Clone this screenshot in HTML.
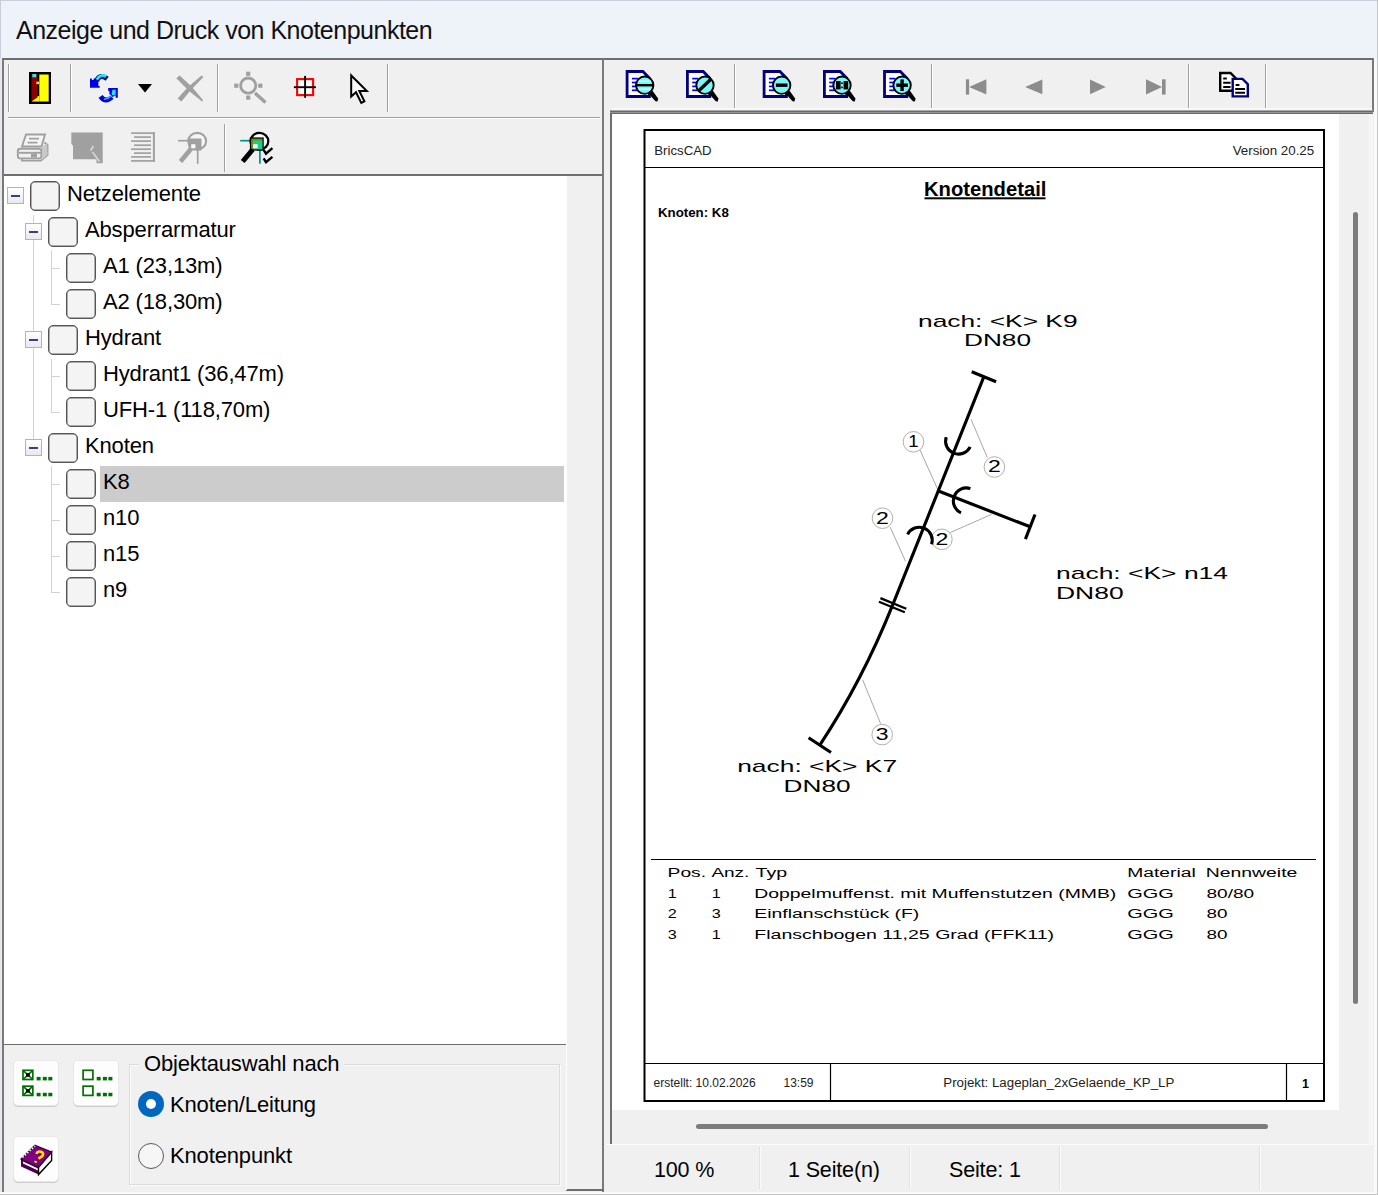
<!DOCTYPE html>
<html>
<head>
<meta charset="utf-8">
<style>
html,body{margin:0;padding:0;}
body{width:1378px;height:1195px;position:relative;overflow:hidden;background:#eef2f9;font-family:"Liberation Sans",sans-serif;color:#000;}
.abs{position:absolute;}
.ui{font-size:22px;letter-spacing:-0.15px;white-space:pre;line-height:24px;}
#title{left:16px;top:16px;font-size:25px;letter-spacing:-0.5px;line-height:28px;white-space:pre;color:#111;}
/* panels */
#lp{left:2px;top:58px;width:602px;height:1134px;background:#f0f0f0;box-sizing:border-box;border:2px solid #7a7a7a;border-top-color:#6e6e6e;border-bottom:none;}
#rp-tb{left:604px;top:58px;width:770px;height:54px;background:#f0f0f0;box-sizing:border-box;border-top:2px solid #6e6e6e;border-right:2px solid #7a7a7a;}
#rp-body{left:604px;top:112px;width:770px;height:1080px;background:#f0f0f0;}
.vsep{width:1px;background:#a0a0a0;box-shadow:1px 0 0 #fff;}
.hsep{height:1px;background:#a0a0a0;box-shadow:0 1px 0 #fff;}
/* tree */
#tree{left:4px;top:174px;width:562px;height:871px;background:#fff;border-top:2px solid #6e6e6e;border-bottom:1px solid #6e6e6e;box-sizing:border-box;}
.cb{width:28px;height:28px;border:1px solid #555;box-shadow:inset 0 0 0 0.5px #666;border-radius:5px;background:#f4f4f4;box-sizing:content-box;}
.ex{width:15px;height:15px;border:1px solid #b4b4b4;background:linear-gradient(#fff,#e8e8ee);}
.ex:after{content:"";position:absolute;left:3px;top:7px;width:9px;height:2px;background:#3c4078;}
.btn{width:44px;height:44px;background:#fdfdfd;border-radius:4px;box-shadow:0 0 0 1px #e8e8e8, 0 1px 0 1px #cdcdcd;}
</style>
</head>
<body>
<div class="abs" style="left:0;top:0;width:1378px;height:1px;background:#c9ced8"></div>
<div class="abs" style="left:0;top:0;width:1px;height:1195px;background:#c9ced8"></div>
<div class="abs" id="title">Anzeige und Druck von Knotenpunkten</div>

<!-- LEFT PANEL -->
<div class="abs" id="lp"></div>
<!-- RIGHT PANEL -->
<div class="abs" id="rp-tb"></div>
<div class="abs" id="rp-body"></div>

<div class="abs" style="left:1374px;top:58px;width:3px;height:1137px;background:#fafafa"></div>
<div class="abs" style="left:0;top:1192px;width:1378px;height:2px;background:#fafafa"></div>
<div class="abs" style="left:1377px;top:0;width:1px;height:1195px;background:#c6c6c6"></div>
<div class="abs" style="left:0;top:1194px;width:1378px;height:1px;background:#c6c6c6"></div>
<div class="abs" style="left:0;top:58px;width:2px;height:1134px;background:#e6e8ec"></div>
<div class="abs" style="left:566px;top:1189px;width:38px;height:2px;background:#6e6e6e"></div>
<!--LEFT-CONTENT-->
<div class="abs vsep" style="left:8px;top:64px;height:48px"></div>
<div class="abs vsep" style="left:70px;top:64px;height:48px"></div>
<div class="abs vsep" style="left:217px;top:64px;height:48px"></div>
<div class="abs vsep" style="left:387px;top:64px;height:48px"></div>
<div class="abs hsep" style="left:8px;top:117px;width:592px"></div>
<div class="abs vsep" style="left:224px;top:124px;height:48px"></div>
<div class="abs" id="tree"></div>
<div class="abs" style="left:4px;top:174px;width:598px;height:2px;background:#6e6e6e"></div>
<div class="abs" style="left:566px;top:176px;width:1px;height:1014px;background:#fff"></div>
<div class="abs" style="left:33px;top:215px;width:1px;height:225px;background:#d2d2d2"></div>
<div class="abs" style="left:51px;top:251px;width:1px;height:54px;background:#d2d2d2"></div>
<div class="abs" style="left:51px;top:268px;width:9px;height:1px;background:#d2d2d2"></div>
<div class="abs" style="left:51px;top:304px;width:9px;height:1px;background:#d2d2d2"></div>
<div class="abs" style="left:51px;top:359px;width:1px;height:54px;background:#d2d2d2"></div>
<div class="abs" style="left:51px;top:376px;width:9px;height:1px;background:#d2d2d2"></div>
<div class="abs" style="left:51px;top:412px;width:9px;height:1px;background:#d2d2d2"></div>
<div class="abs" style="left:51px;top:467px;width:1px;height:126px;background:#d2d2d2"></div>
<div class="abs" style="left:51px;top:484px;width:9px;height:1px;background:#d2d2d2"></div>
<div class="abs" style="left:51px;top:520px;width:9px;height:1px;background:#d2d2d2"></div>
<div class="abs" style="left:51px;top:556px;width:9px;height:1px;background:#d2d2d2"></div>
<div class="abs" style="left:51px;top:592px;width:9px;height:1px;background:#d2d2d2"></div>
<div class="abs ex" style="left:7px;top:187px"></div>
<div class="abs cb" style="left:30px;top:181px"></div>
<div class="abs ui" style="left:67px;top:182px">Netzelemente</div>
<div class="abs ex" style="left:25px;top:223px"></div>
<div class="abs cb" style="left:48px;top:217px"></div>
<div class="abs ui" style="left:85px;top:218px">Absperrarmatur</div>
<div class="abs cb" style="left:66px;top:253px"></div>
<div class="abs ui" style="left:103px;top:254px">A1 (23,13m)</div>
<div class="abs cb" style="left:66px;top:289px"></div>
<div class="abs ui" style="left:103px;top:290px">A2 (18,30m)</div>
<div class="abs ex" style="left:25px;top:331px"></div>
<div class="abs cb" style="left:48px;top:325px"></div>
<div class="abs ui" style="left:85px;top:326px">Hydrant</div>
<div class="abs cb" style="left:66px;top:361px"></div>
<div class="abs ui" style="left:103px;top:362px">Hydrant1 (36,47m)</div>
<div class="abs cb" style="left:66px;top:397px"></div>
<div class="abs ui" style="left:103px;top:398px">UFH-1 (118,70m)</div>
<div class="abs ex" style="left:25px;top:439px"></div>
<div class="abs cb" style="left:48px;top:433px"></div>
<div class="abs ui" style="left:85px;top:434px">Knoten</div>
<div class="abs" style="left:100px;top:466px;width:464px;height:36px;background:#cccccc"></div>
<div class="abs cb" style="left:66px;top:469px"></div>
<div class="abs ui" style="left:103px;top:470px">K8</div>
<div class="abs cb" style="left:66px;top:505px"></div>
<div class="abs ui" style="left:103px;top:506px">n10</div>
<div class="abs cb" style="left:66px;top:541px"></div>
<div class="abs ui" style="left:103px;top:542px">n15</div>
<div class="abs cb" style="left:66px;top:577px"></div>
<div class="abs ui" style="left:103px;top:578px">n9</div>
<div class="abs btn" style="left:14px;top:1061px"></div>
<div class="abs btn" style="left:74px;top:1061px"></div>
<div class="abs btn" style="left:14px;top:1137px"></div>
<div class="abs" style="left:129px;top:1064px;width:431px;height:121px;box-sizing:border-box;border:1px solid #dcdcdc;box-shadow:inset 1px 1px 0 #fafafa, 1px 1px 0 #fafafa"></div>
<div class="abs ui" style="left:139px;top:1052px;padding:0 5px;background:#f0f0f0">Objektauswahl nach</div>
<div class="abs" style="left:138px;top:1091px;width:26px;height:26px;border-radius:50%;background:#0067c0;"></div>
<div class="abs" style="left:146px;top:1099px;width:10px;height:10px;border-radius:50%;background:#fff;"></div>
<div class="abs" style="left:138px;top:1143px;width:24px;height:24px;border-radius:50%;background:#f6f6f6;border:1px solid #5a5a5a"></div>
<div class="abs ui" style="left:170px;top:1093px">Knoten/Leitung</div>
<div class="abs ui" style="left:170px;top:1144px">Knotenpunkt</div>
<svg class="abs" style="left:0;top:0" width="1378" height="1195" viewBox="0 0 1378 1195">
<rect x="29" y="72" width="22" height="32" fill="#000"/>
<rect x="31.5" y="74.5" width="6" height="27" fill="#8b0000"/>
<rect x="39.3" y="74.5" width="9.4" height="27" fill="#ffff00"/>
<polygon points="31.5,101.5 37.6,97.2 37.6,96 39.3,96 39.3,101.5" fill="#ffff00"/>
<rect x="32.3" y="74" width="4" height="3.3" fill="#40e0e0"/>
<rect x="36.4" y="81.6" width="2.6" height="2.6" fill="#ffe040"/>
<path d="M96.5 81 Q100 73.2 107.2 78.8" fill="none" stroke="#0a1a70" stroke-width="5"/>
<path d="M96.8 79.6 Q100.4 73.2 106 76.6" fill="none" stroke="#20e8ff" stroke-width="2.6"/>
<path d="M90 78.6 L91.8 78.6 L91.8 80 L93.6 80 L93.6 78.6 L95.6 78.6 L95.6 80 L97.6 80 L98.4 82.6 L98.4 86 L99.7 86 L99.7 87.7 L90 87.7 Z" fill="#0000e6"/>
<path d="M100.6 96.4 Q105 103.2 112 97.2" fill="none" stroke="#0000dc" stroke-width="4.8"/>
<path d="M108.2 88.1 L117.8 88.1 L117.8 97.8 L115.6 97.8 L115.6 95.2 L112.6 97 L110.4 94.4 L109.4 94.4 L109.4 91 L108.2 91 Z" fill="#0000e6"/>
<path d="M112.4 89.8 L115.6 89.8 L115.6 94.4 L113 95.6 L111.6 94 Z" fill="#20e8ff"/>
<path d="M104 99.3 Q107 99.5 110.6 96.4" fill="none" stroke="#30b0ff" stroke-width="1.4"/>
<polygon points="138,84 152,84 145,92.4" fill="#000"/>
<path d="M176.3 78.2 L179.6 75.4 L191.5 86.5 L203.2 100.2 L202 101.6 L188.5 90.5 Z" fill="#a0a0a0"/>
<path d="M201.6 75.6 L203.4 77 L190 91 L181.5 101.6 L177.6 98.6 L187.5 87.5 Z" fill="#a0a0a0"/>
<circle cx="248.2" cy="85.6" r="7.6" fill="none" stroke="#a0a0a0" stroke-width="2.8"/>
<rect x="246.1" y="71.7" width="4.2" height="4.2" fill="#a0a0a0"/>
<rect x="246.1" y="95.5" width="4.2" height="4.2" fill="#a0a0a0"/>
<rect x="234.20000000000002" y="83.60000000000001" width="4.2" height="4.2" fill="#a0a0a0"/>
<rect x="258.2" y="83.60000000000001" width="4.2" height="4.2" fill="#a0a0a0"/>
<line x1="255" y1="93" x2="265.5" y2="102.5" stroke="#a0a0a0" stroke-width="3.4"/>
<rect x="297.1" y="79.1" width="16" height="16" fill="#fdfdfd" stroke="#ff0000" stroke-width="2.1"/>
<line x1="293.9" y1="87.2" x2="315.9" y2="87.2" stroke="#000" stroke-width="1.9"/>
<line x1="305.1" y1="75.9" x2="305.1" y2="97.8" stroke="#000" stroke-width="1.9"/>
<polygon points="351.2,75.5 351.2,96.5 356,92.2 361.3,103 364.4,101.4 359.3,91 366.8,91" fill="#fff" stroke="#000" stroke-width="2" stroke-linejoin="miter"/>
<g fill="none" stroke="#a0a0a0" stroke-width="1.9">
<path d="M26 134.5 L45 134.5 L41.5 146.5 L22 146.5 Z" fill="#f4f4f4"/>
<path d="M29 138.6 L39 138.6 M27.5 142.6 L37.5 142.6" stroke-width="1.8"/>
<rect x="17.8" y="148.8" width="23.6" height="9.6" rx="2.5" fill="#f0f0f0"/>
<path d="M19 152.8 L41 152.8" />
<path d="M22 158.6 L22 160.6 L41 160.6 L47.5 155 L47.5 145 L44.5 142.5 M41.4 150 L47 144.6"/>
</g>
<rect x="31" y="153.5" width="6" height="4" fill="#a0a0a0"/>
<path d="M42 147 L47 143.5 L47.5 155 L42 160 Z" fill="#c8c8c8"/>
<path d="M71.3 132.4 L102.7 132.4 L102.7 163.3 L96.5 163.3 L96.5 159.3 L73 159.3 L73 146 L71.3 143.5 Z" fill="#a0a0a0"/>
<path d="M93.5 146 L90.5 150.5 M92.5 152 L99.5 161.5" stroke="#d8d8d8" stroke-width="1.6" fill="none"/>
<g stroke="#a0a0a0" stroke-width="1.7" fill="none">
<line x1="131.1" y1="133.1" x2="154.9" y2="133.1"/>
<line x1="134" y1="137.1" x2="151" y2="137.1"/>
<line x1="131.1" y1="141.1" x2="151" y2="141.1"/>
<line x1="134" y1="145.2" x2="151" y2="145.2"/>
<line x1="131.1" y1="149.2" x2="151" y2="149.2"/>
<line x1="134" y1="153.1" x2="151" y2="153.1"/>
<line x1="131.1" y1="156.9" x2="151" y2="156.9"/>
<line x1="131.1" y1="160.9" x2="154.9" y2="160.9"/>
<line x1="153.9" y1="132.3" x2="153.9" y2="161.7" stroke-width="2"/>
</g>
<line x1="178" y1="140.7" x2="189.5" y2="140.7" stroke="#a0a0a0" stroke-width="1.7"/>
<line x1="197.7" y1="150" x2="197.7" y2="163.8" stroke="#a0a0a0" stroke-width="1.7"/>
<ellipse cx="197.2" cy="141.2" rx="8.9" ry="8.3" fill="#f6f6f6" stroke="#a0a0a0" stroke-width="2.1"/>
<rect x="188.5" y="138.5" width="13" height="12" fill="#a0a0a0"/>
<rect x="191.2" y="144.3" width="4.2" height="4" fill="#fff"/>
<line x1="190.5" y1="149.5" x2="180.5" y2="161.5" stroke="#a0a0a0" stroke-width="4.6"/>
<line x1="240.2" y1="140.7" x2="251.7" y2="140.7" stroke="#009090" stroke-width="1.7"/>
<line x1="259.9" y1="150" x2="259.9" y2="163.8" stroke="#009090" stroke-width="1.7"/>
<ellipse cx="259.4" cy="141.2" rx="8.9" ry="8.3" fill="#fff" stroke="#000" stroke-width="2.3"/>
<rect x="250.5" y="138" width="12.6" height="12" fill="#22cc88"/>
<path d="M250.5 138 h12.6 v2.4 h-10 v9.6 h-2.6 Z" fill="#6b8e23"/>
<rect x="250.5" y="138" width="12.6" height="12" fill="none" stroke="#000" stroke-width="1.2"/>
<rect x="253.2" y="144.2" width="4.4" height="4" fill="#fff"/>
<line x1="252.7" y1="149.5" x2="242.7" y2="161.5" stroke="#000" stroke-width="5"/>
<path d="M263.6 149.8 L266 153.6 L272.4 148.2" fill="none" stroke="#000" stroke-width="2.4"/>
<path d="M263.6 158.4 L266 162.2 L272.4 156.79999999999998" fill="none" stroke="#000" stroke-width="2.4"/>
<path d="M627.1 71.5 L642.9 71.5 L649.4 78 L649.4 96.5 L627.1 96.5 Z" fill="#fff" stroke="#000080" stroke-width="2.8"/>
<line x1="631.9" y1="78.6" x2="637.9" y2="78.6" stroke="#0000ff" stroke-width="1.7"/>
<line x1="631.9" y1="82.5" x2="637.9" y2="82.5" stroke="#0000ff" stroke-width="1.7"/>
<line x1="631.9" y1="86.4" x2="637.9" y2="86.4" stroke="#0000ff" stroke-width="1.7"/>
<line x1="631.9" y1="90.3" x2="637.9" y2="90.3" stroke="#0000ff" stroke-width="1.7"/>
<polygon points="648.4,93.5 652.4,90.5 658.1,98.5 657.5,101.6 655.5,101.2" fill="#000"/>
<circle cx="644.6999999999999" cy="85.2" r="8.7" fill="#7af6f6" stroke="#000" stroke-width="1.9"/>
<rect x="636.0999999999999" y="84.0" width="17.2" height="2.4" fill="#000"/>
<rect x="638.6999999999999" y="80.60000000000001" width="12" height="1.2" fill="#d8ffff"/>
<rect x="638.6999999999999" y="88.60000000000001" width="12" height="1.2" fill="#d8ffff"/>
<path d="M687.4000000000001 71.5 L703.2 71.5 L709.7 78 L709.7 96.5 L687.4000000000001 96.5 Z" fill="#fff" stroke="#000080" stroke-width="2.8"/>
<line x1="692.2" y1="78.6" x2="698.2" y2="78.6" stroke="#0000ff" stroke-width="1.7"/>
<line x1="692.2" y1="82.5" x2="698.2" y2="82.5" stroke="#0000ff" stroke-width="1.7"/>
<line x1="692.2" y1="86.4" x2="698.2" y2="86.4" stroke="#0000ff" stroke-width="1.7"/>
<line x1="692.2" y1="90.3" x2="698.2" y2="90.3" stroke="#0000ff" stroke-width="1.7"/>
<polygon points="708.7,93.5 712.7,90.5 718.4000000000001,98.5 717.8000000000001,101.6 715.8000000000001,101.2" fill="#000"/>
<circle cx="705.0" cy="85.2" r="8.7" fill="#7af6f6" stroke="#000" stroke-width="1.9"/>
<line x1="699.0" y1="90.4" x2="710.6" y2="79.60000000000001" stroke="#000" stroke-width="3.4"/>
<path d="M764.1 71.5 L779.9 71.5 L786.4 78 L786.4 96.5 L764.1 96.5 Z" fill="#fff" stroke="#000080" stroke-width="2.8"/>
<line x1="768.9" y1="78.6" x2="774.9" y2="78.6" stroke="#0000ff" stroke-width="1.7"/>
<line x1="768.9" y1="82.5" x2="774.9" y2="82.5" stroke="#0000ff" stroke-width="1.7"/>
<line x1="768.9" y1="86.4" x2="774.9" y2="86.4" stroke="#0000ff" stroke-width="1.7"/>
<line x1="768.9" y1="90.3" x2="774.9" y2="90.3" stroke="#0000ff" stroke-width="1.7"/>
<polygon points="785.4,93.5 789.4,90.5 795.1,98.5 794.5,101.6 792.5,101.2" fill="#000"/>
<circle cx="781.6999999999999" cy="85.2" r="8.7" fill="#7af6f6" stroke="#000" stroke-width="1.9"/>
<rect x="775.9" y="83.5" width="11.6" height="3.4" fill="#000"/>
<path d="M824.4000000000001 71.5 L840.2 71.5 L846.7 78 L846.7 96.5 L824.4000000000001 96.5 Z" fill="#fff" stroke="#000080" stroke-width="2.8"/>
<line x1="829.2" y1="78.6" x2="835.2" y2="78.6" stroke="#0000ff" stroke-width="1.7"/>
<line x1="829.2" y1="82.5" x2="835.2" y2="82.5" stroke="#0000ff" stroke-width="1.7"/>
<line x1="829.2" y1="86.4" x2="835.2" y2="86.4" stroke="#0000ff" stroke-width="1.7"/>
<line x1="829.2" y1="90.3" x2="835.2" y2="90.3" stroke="#0000ff" stroke-width="1.7"/>
<polygon points="845.7,93.5 849.7,90.5 855.4000000000001,98.5 854.8000000000001,101.6 852.8000000000001,101.2" fill="#000"/>
<circle cx="842.0" cy="85.2" r="8.7" fill="#7af6f6" stroke="#000" stroke-width="1.9"/>
<rect x="836.0" y="81.0" width="4.6" height="8.4" fill="#000"/>
<rect x="843.6" y="81.0" width="4.6" height="8.4" fill="#000"/>
<rect x="841.2" y="82.4" width="1.6" height="1.6" fill="#000"/>
<rect x="841.2" y="86.60000000000001" width="1.6" height="1.6" fill="#000"/>
<path d="M884.5 71.5 L900.3 71.5 L906.8 78 L906.8 96.5 L884.5 96.5 Z" fill="#fff" stroke="#000080" stroke-width="2.8"/>
<line x1="889.3" y1="78.6" x2="895.3" y2="78.6" stroke="#0000ff" stroke-width="1.7"/>
<line x1="889.3" y1="82.5" x2="895.3" y2="82.5" stroke="#0000ff" stroke-width="1.7"/>
<line x1="889.3" y1="86.4" x2="895.3" y2="86.4" stroke="#0000ff" stroke-width="1.7"/>
<line x1="889.3" y1="90.3" x2="895.3" y2="90.3" stroke="#0000ff" stroke-width="1.7"/>
<polygon points="905.8,93.5 909.8,90.5 915.5,98.5 914.9,101.6 912.9,101.2" fill="#000"/>
<circle cx="902.0999999999999" cy="85.2" r="8.7" fill="#7af6f6" stroke="#000" stroke-width="1.9"/>
<rect x="896.3" y="83.5" width="11.6" height="3.4" fill="#000"/>
<rect x="900.3999999999999" y="79.4" width="3.4" height="11.6" fill="#000"/>
<rect x="965.9" y="79.3" width="3.2" height="15.3" fill="#8c8c8c"/><polygon points="969.1,87 986.4,79.3 986.4,94.6" fill="#8c8c8c"/>
<polygon points="1025.1,87 1042.4,79.6 1042.4,94.3" fill="#8c8c8c"/>
<polygon points="1105.8,87 1090,79.6 1090,94.3" fill="#8c8c8c"/>
<polygon points="1162,87 1146,79.3 1146,94.6" fill="#8c8c8c"/><rect x="1162" y="79.3" width="3.6" height="15.3" fill="#8c8c8c"/>
<path d="M1220.2 73 L1230.5 73 L1235.5 78 L1235.5 90.8 L1220.2 90.8 Z" fill="#fff" stroke="#000" stroke-width="2.4"/>
<path d="M1223.2 78.6 h3.6 M1223.2 82.8 h7.4 M1223.2 86.9 h7.4" stroke="#000" stroke-width="2" fill="none"/>
<path d="M1232.7 78.9 L1242.5 78.9 L1247.8 84.2 L1247.8 96.4 L1232.7 96.4 Z" fill="#fff" stroke="#000080" stroke-width="2.4"/>
<path d="M1235.6 85 h3.8 M1235.2 88.9 h9.8 M1235.2 92.7 h9.8" stroke="#000" stroke-width="2" fill="none"/>
<rect x="23" y="1070.3" width="9.8" height="9.2" fill="#fff" stroke="#007000" stroke-width="1.7"/>
<path d="M23 1070.3 l9.8 9.2 M32.8 1070.3 l-9.8 9.2" stroke="#007000" stroke-width="1.6"/>
<rect x="26" y="1073.1" width="3.8" height="3.6" fill="#000"/>
<rect x="36.6" y="1076.8999999999999" width="4" height="3.5" fill="#007000"/>
<rect x="42.8" y="1076.8999999999999" width="4" height="3.5" fill="#007000"/>
<rect x="48.3" y="1076.8999999999999" width="4" height="3.5" fill="#007000"/>
<rect x="23" y="1086.2" width="9.8" height="9.2" fill="#fff" stroke="#007000" stroke-width="1.7"/>
<path d="M23 1086.2 l9.8 9.2 M32.8 1086.2 l-9.8 9.2" stroke="#007000" stroke-width="1.6"/>
<rect x="26" y="1089.0" width="3.8" height="3.6" fill="#000"/>
<rect x="36.6" y="1092.8" width="4" height="3.5" fill="#007000"/>
<rect x="42.8" y="1092.8" width="4" height="3.5" fill="#007000"/>
<rect x="48.3" y="1092.8" width="4" height="3.5" fill="#007000"/>
<rect x="83.1" y="1070.3" width="9.8" height="9.2" fill="#fff" stroke="#007000" stroke-width="1.7"/>
<rect x="96.69999999999999" y="1076.8999999999999" width="4" height="3.5" fill="#007000"/>
<rect x="102.89999999999999" y="1076.8999999999999" width="4" height="3.5" fill="#007000"/>
<rect x="108.39999999999999" y="1076.8999999999999" width="4" height="3.5" fill="#007000"/>
<rect x="83.1" y="1086.2" width="9.8" height="9.2" fill="#fff" stroke="#007000" stroke-width="1.7"/>
<rect x="96.69999999999999" y="1092.8" width="4" height="3.5" fill="#007000"/>
<rect x="102.89999999999999" y="1092.8" width="4" height="3.5" fill="#007000"/>
<rect x="108.39999999999999" y="1092.8" width="4" height="3.5" fill="#007000"/>
<polygon points="21,1159 21,1166.5 38.5,1174.6 38.5,1167.2" fill="#4b004b"/>
<polygon points="23,1163.6 38.5,1170.8 38.5,1168.8 23,1161.6" fill="#fff"/>
<polygon points="38.5,1167.2 51.6,1152 51.6,1160.5 38.5,1174.6" fill="#fff" stroke="#000" stroke-width="1.4"/>
<polygon points="35,1145.3 51.6,1152 38.5,1167.2 21,1159" fill="#800080" stroke="#30002c" stroke-width="1.2"/>
<path d="M22.5 1157.5 L35 1146" stroke="#fff" stroke-width="1.6" stroke-dasharray="1.6 1.6"/>
<path d="M36.5 1154 q0.5-3.2 4.5-2.2 q3.4 1.2 1.4 4.2 l-4 2.6 M36 1161 l-0.8 1.6" fill="none" stroke="#ffe000" stroke-width="2.6"/>
</svg>
<!--/LEFT-CONTENT-->
<!--RIGHT-CONTENT-->
<div class="abs vsep" style="left:734px;top:64px;height:45px"></div>
<div class="abs vsep" style="left:931px;top:64px;height:45px"></div>
<div class="abs vsep" style="left:1188px;top:64px;height:45px"></div>
<div class="abs vsep" style="left:1265px;top:64px;height:45px"></div>
<div class="abs" style="left:610px;top:112px;width:729px;height:998px;background:#fff;box-sizing:border-box;border-left:2px solid #6e6e6e;border-top:2px solid #6e6e6e"></div>
<div class="abs" style="left:610px;top:1110px;width:2px;height:34px;background:#6e6e6e"></div>
<div class="abs" style="left:610px;top:110px;width:763px;height:1px;background:#a8a8a8"></div>
<div class="abs" style="left:610px;top:111px;width:763px;height:1px;background:#6a6a6a"></div>
<div class="abs" style="left:610px;top:112px;width:763px;height:1px;background:#949494"></div>
<div class="abs" style="left:610px;top:113px;width:763px;height:1px;background:#6a6a6a"></div>
<div class="abs" style="left:612px;top:108px;width:760px;height:2px;background:#f8f8f8"></div>
<div class="abs" style="left:1369px;top:114px;width:1px;height:1030px;background:#fafafa"></div>
<div class="abs" style="left:1371px;top:114px;width:2px;height:1030px;background:#f8f8f8"></div>
<div class="abs" style="left:1353px;top:212px;width:5px;height:792px;border-radius:3px;background:#7c7c7c"></div>
<div class="abs" style="left:696px;top:1124px;width:572px;height:5px;border-radius:3px;background:#7c7c7c"></div>
<div class="abs" style="left:606px;top:1144px;width:767px;height:1px;background:#fcfcfc"></div>
<div class="abs" style="left:759px;top:1147px;width:1px;height:42px;background:#e2e2e2;box-shadow:1px 0 0 #fbfbfb"></div>
<div class="abs" style="left:909px;top:1147px;width:1px;height:42px;background:#e2e2e2;box-shadow:1px 0 0 #fbfbfb"></div>
<div class="abs" style="left:1059px;top:1147px;width:1px;height:42px;background:#e2e2e2;box-shadow:1px 0 0 #fbfbfb"></div>
<div class="abs" style="left:1259px;top:1147px;width:1px;height:42px;background:#e2e2e2;box-shadow:1px 0 0 #fbfbfb"></div>
<div class="abs ui" style="left:654px;top:1158px;font-size:21.5px">100 %</div>
<div class="abs ui" style="left:788px;top:1158px;font-size:21.5px">1 Seite(n)</div>
<div class="abs ui" style="left:949px;top:1158px;font-size:21.5px">Seite: 1</div>
<svg class="abs" style="left:0;top:0" width="1378" height="1195" viewBox="0 0 1378 1195" font-family="Liberation Sans, sans-serif">
<rect x="644.5" y="130" width="679.5" height="971" fill="none" stroke="#000" stroke-width="2"/>
<line x1="644" y1="167.5" x2="1324" y2="167.5" stroke="#000" stroke-width="1.2"/>
<line x1="644" y1="1063.5" x2="1324" y2="1063.5" stroke="#000" stroke-width="1.2"/>
<line x1="830.5" y1="1063" x2="830.5" y2="1101" stroke="#000" stroke-width="1.2"/>
<line x1="1286.5" y1="1063" x2="1286.5" y2="1101" stroke="#000" stroke-width="1.2"/>
<text x="654.3" y="155" font-size="13" font-weight="400" text-anchor="start" fill="#222" textLength="57.3" lengthAdjust="spacingAndGlyphs">BricsCAD</text>
<text x="1232.7" y="155" font-size="13" font-weight="400" text-anchor="start" fill="#222" textLength="81.5" lengthAdjust="spacingAndGlyphs">Version 20.25</text>
<text x="924" y="196.2" font-size="19.5" font-weight="700" text-anchor="start" fill="#000" textLength="122.4" lengthAdjust="spacingAndGlyphs">Knotendetail</text>
<rect x="924.5" y="197.3" width="121" height="2" fill="#000"/>
<text x="657.9" y="217" font-size="12.5" font-weight="700" text-anchor="start" fill="#000" textLength="71" lengthAdjust="spacingAndGlyphs">Knoten: K8</text>
<text x="653.6" y="1086.6" font-size="12" font-weight="400" text-anchor="start" fill="#222">erstellt: 10.02.2026</text>
<text x="783.5" y="1086.6" font-size="12" font-weight="400" text-anchor="start" fill="#222">13:59</text>
<text x="943.3" y="1086.6" font-size="12" font-weight="400" text-anchor="start" fill="#222" textLength="231" lengthAdjust="spacingAndGlyphs">Projekt: Lageplan_2xGelaende_KP_LP</text>
<text x="1302" y="1088" font-size="12.5" font-weight="700" text-anchor="start" fill="#000">1</text>
<line x1="651" y1="859.5" x2="1316" y2="859.5" stroke="#000" stroke-width="1.2"/>
<text x="667.6" y="876.8" font-size="12.3" font-weight="400" text-anchor="start" fill="#000" textLength="38.4" lengthAdjust="spacingAndGlyphs">Pos.</text>
<text x="711.4" y="876.8" font-size="12.3" font-weight="400" text-anchor="start" fill="#000" textLength="38" lengthAdjust="spacingAndGlyphs">Anz.</text>
<text x="755.6" y="876.8" font-size="12.3" font-weight="400" text-anchor="start" fill="#000" textLength="31.5" lengthAdjust="spacingAndGlyphs">Typ</text>
<text x="1127.2" y="876.8" font-size="12.3" font-weight="400" text-anchor="start" fill="#000" textLength="68.5" lengthAdjust="spacingAndGlyphs">Material</text>
<text x="1205.8" y="876.8" font-size="12.3" font-weight="400" text-anchor="start" fill="#000" textLength="91.5" lengthAdjust="spacingAndGlyphs">Nennweite</text>
<text x="667.8" y="897.5" font-size="12.3" font-weight="400" text-anchor="start" fill="#000" textLength="9" lengthAdjust="spacingAndGlyphs">1</text>
<text x="711.8" y="897.5" font-size="12.3" font-weight="400" text-anchor="start" fill="#000" textLength="9" lengthAdjust="spacingAndGlyphs">1</text>
<text x="754.3" y="897.5" font-size="12.3" font-weight="400" text-anchor="start" fill="#000" textLength="362.0" lengthAdjust="spacingAndGlyphs">Doppelmuffenst. mit Muffenstutzen (MMB)</text>
<text x="1127.2" y="897.5" font-size="12.3" font-weight="400" text-anchor="start" fill="#000" textLength="46.5" lengthAdjust="spacingAndGlyphs">GGG</text>
<text x="1206.5" y="897.5" font-size="12.3" font-weight="400" text-anchor="start" fill="#000" textLength="47.7" lengthAdjust="spacingAndGlyphs">80/80</text>
<text x="667.8" y="917.9" font-size="12.3" font-weight="400" text-anchor="start" fill="#000" textLength="9" lengthAdjust="spacingAndGlyphs">2</text>
<text x="711.8" y="917.9" font-size="12.3" font-weight="400" text-anchor="start" fill="#000" textLength="9" lengthAdjust="spacingAndGlyphs">3</text>
<text x="754.3" y="917.9" font-size="12.3" font-weight="400" text-anchor="start" fill="#000" textLength="165.0" lengthAdjust="spacingAndGlyphs">Einflanschstück (F)</text>
<text x="1127.2" y="917.9" font-size="12.3" font-weight="400" text-anchor="start" fill="#000" textLength="46.5" lengthAdjust="spacingAndGlyphs">GGG</text>
<text x="1206.5" y="917.9" font-size="12.3" font-weight="400" text-anchor="start" fill="#000" textLength="21.0" lengthAdjust="spacingAndGlyphs">80</text>
<text x="667.8" y="938.6" font-size="12.3" font-weight="400" text-anchor="start" fill="#000" textLength="9" lengthAdjust="spacingAndGlyphs">3</text>
<text x="711.8" y="938.6" font-size="12.3" font-weight="400" text-anchor="start" fill="#000" textLength="9" lengthAdjust="spacingAndGlyphs">1</text>
<text x="754.3" y="938.6" font-size="12.3" font-weight="400" text-anchor="start" fill="#000" textLength="299.8" lengthAdjust="spacingAndGlyphs">Flanschbogen 11,25 Grad (FFK11)</text>
<text x="1127.2" y="938.6" font-size="12.3" font-weight="400" text-anchor="start" fill="#000" textLength="46.5" lengthAdjust="spacingAndGlyphs">GGG</text>
<text x="1206.5" y="938.6" font-size="12.3" font-weight="400" text-anchor="start" fill="#000" textLength="21.0" lengthAdjust="spacingAndGlyphs">80</text>
<g fill="none" stroke="#9c9c9c" stroke-width="0.9">
<line x1="920" y1="450" x2="937.8" y2="489.6"/>
<line x1="971" y1="419.2" x2="987.3" y2="457.5"/>
<line x1="890.2" y1="527.2" x2="905.5" y2="561.2"/>
<line x1="950.4" y1="532.5" x2="991.7" y2="514.3"/>
<line x1="862.6" y1="679.8" x2="880.6" y2="723.6"/>
</g>
<circle cx="913.5" cy="441.8" r="10.3" fill="#fff" stroke="#b0b0b0" stroke-width="1"/>
<text x="908.3" y="447.2" font-size="15.6" font-weight="400" text-anchor="start" fill="#000" textLength="10.4" lengthAdjust="spacingAndGlyphs">1</text>
<circle cx="994.4" cy="467" r="10.3" fill="#fff" stroke="#b0b0b0" stroke-width="1"/>
<text x="988.0" y="472.4" font-size="15.6" font-weight="400" text-anchor="start" fill="#000" textLength="12.8" lengthAdjust="spacingAndGlyphs">2</text>
<circle cx="882.5" cy="518.2" r="10.3" fill="#fff" stroke="#b0b0b0" stroke-width="1"/>
<text x="876.1" y="523.6" font-size="15.6" font-weight="400" text-anchor="start" fill="#000" textLength="12.8" lengthAdjust="spacingAndGlyphs">2</text>
<circle cx="941.9" cy="539.3" r="10.3" fill="#fff" stroke="#b0b0b0" stroke-width="1"/>
<text x="935.5" y="544.6999999999999" font-size="15.6" font-weight="400" text-anchor="start" fill="#000" textLength="12.8" lengthAdjust="spacingAndGlyphs">2</text>
<circle cx="882.2" cy="734.6" r="10.3" fill="#fff" stroke="#b0b0b0" stroke-width="1"/>
<text x="875.8000000000001" y="740.0" font-size="15.6" font-weight="400" text-anchor="start" fill="#000" textLength="12.8" lengthAdjust="spacingAndGlyphs">3</text>
<g fill="none" stroke="#000" stroke-width="3.1" stroke-linecap="butt">
<path d="M983.9 376.7 L892.6 605.2 Q862.0 681.5 819.8 745.1"/>
<line x1="971.7" y1="371.7" x2="996.1" y2="381.7"/>
<line x1="808.6" y1="737.7" x2="831.0" y2="752.5"/>
<line x1="937.8" y1="490.8" x2="1030.2" y2="526.8"/>
<line x1="1035.0" y1="514.5" x2="1025.4" y2="539.1"/>
<path d="M946.2 437.1 A13 13 0 0 0 970.2 446.9"/>
<path d="M907.6 534.4 A13 13 0 0 1 931.6 544.2"/>
<path d="M970.4 488.6 A13 13 0 0 0 961.0 512.8"/>
</g>
<g fill="none" stroke="#000" stroke-width="2.3">
<line x1="880.4" y1="598.1" x2="906.3" y2="608.7"/>
<line x1="878.9" y1="601.7" x2="904.8" y2="612.3"/>
</g>
<text x="918" y="326.6" font-size="17" font-weight="400" text-anchor="start" fill="#000" textLength="159.6" lengthAdjust="spacingAndGlyphs">nach: &lt;K&gt; K9</text>
<text x="964" y="346.4" font-size="17" font-weight="400" text-anchor="start" fill="#000" textLength="67" lengthAdjust="spacingAndGlyphs">DN80</text>
<text x="1056" y="579.1" font-size="17" font-weight="400" text-anchor="start" fill="#000" textLength="172" lengthAdjust="spacingAndGlyphs">nach: &lt;K&gt; n14</text>
<text x="1056" y="599" font-size="17" font-weight="400" text-anchor="start" fill="#000" textLength="67.6" lengthAdjust="spacingAndGlyphs">DN80</text>
<text x="737.2" y="772.4" font-size="17" font-weight="400" text-anchor="start" fill="#000" textLength="160" lengthAdjust="spacingAndGlyphs">nach: &lt;K&gt; K7</text>
<text x="783.6" y="792.4" font-size="17" font-weight="400" text-anchor="start" fill="#000" textLength="67" lengthAdjust="spacingAndGlyphs">DN80</text>
</svg>
<!--/RIGHT-CONTENT-->
</body>
</html>
